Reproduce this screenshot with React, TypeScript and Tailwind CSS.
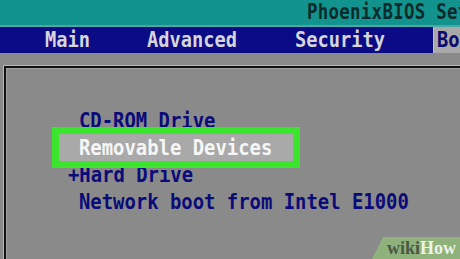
import React from "react";

const MenuItem = ({ label, className = "" }: { label: string; className?: string }) => {
    return (
        <div className={"h-[27px] leading-[27px] whitespace-nowrap " + className}>
            <span className="inline-block scale-y-[1.15]">{label}</span>
        </div>
    );
};

const Tab = ({ label, className = "" }: { label: string; className?: string }) => {
    return <span className={"inline-block scale-y-[1.18] " + className}>{label}</span>;
};

const WikiHowBadge = () => {
    return (
        <div className="absolute right-0 bottom-0 w-[88px] h-[22px]">
            <svg width="88" height="22" viewBox="0 0 88 22" className="absolute inset-0">
                <polygon points="11,0 88,0 88,22 0,22" fill="#8fb27c" />
            </svg>
            <div className="relative pl-[15px] h-full flex items-center font-['Liberation_Serif',serif] font-bold text-[18px] leading-none">
                <span className="text-[#4a5744]">wiki</span>
                <span className="text-[#eef3ea]">How</span>
            </div>
        </div>
    );
};

export default function App() {
    return (
        <div className="relative w-[460px] h-[259px] overflow-hidden bg-[#8a8a8a] font-['DejaVu_Sans_Mono',monospace] font-bold">
            {/* title strip */}
            <div className="h-[27px] bg-[#13938e] border-b-2 border-[#46aaa6] pl-[307px] text-[17.4px] leading-[25px] text-[#0a2b2b] whitespace-nowrap overflow-hidden">
                <Tab label="PhoenixBIOS Setup Utility" className="tracking-[0.3px]" />
            </div>

            {/* tabs */}
            <div className="h-[26px] bg-[#0b0b86] flex text-[18.7px] leading-[26px] text-[#d6d6dc] whitespace-nowrap">
                <Tab label="Main" className="ml-[45px]" />
                <Tab label="Advanced" className="ml-[57px]" />
                <Tab label="Security" className="ml-[58px]" />
                <div className="ml-[48px] flex-1 bg-[#a9a9a9] border-l border-[#c4c4c4] pl-[3px] text-[#0b0b6e] overflow-hidden">
                    <Tab label="Boot" />
                </div>
            </div>

            {/* main frame */}
            <div className="ml-[3px] mt-[12px] h-[194px] border-l border-t border-[#b9b9b9]">
                <div className="h-full border-l-2 border-t-2 border-[#111111]">
                    <div className="h-full border-l border-t border-[#a0a0a0] pt-[38px] pl-[72px] text-[18.9px] text-[#0a0a78]">
                        <MenuItem label="CD-ROM Drive" />
                        <MenuItem
                            label="Removable Devices"
                            className="relative z-10 -ml-[20px] pl-[20px] w-[234px] bg-[#a9a9a9] text-[#f6f6f6] shadow-[0_0_0_7px_#3be52d]"
                        />
                        <MenuItem label="+Hard Drive" className="-ml-[11px]" />
                        <MenuItem label="Network boot from Intel E1000" />
                    </div>
                </div>
            </div>

            <WikiHowBadge />
        </div>
    );
}
